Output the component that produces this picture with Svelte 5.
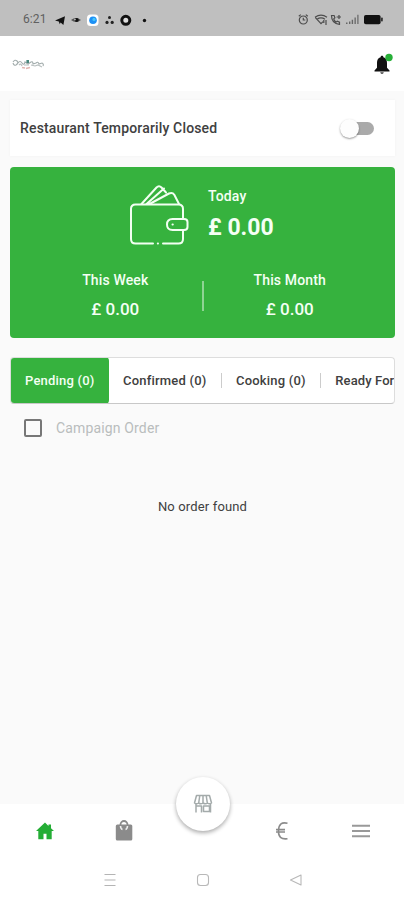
<script>
  const tabs = ['Pending (0)', 'Confirmed (0)', 'Cooking (0)', 'Ready For'];
  let active = $state(0);
  let closed = $state(false);
</script>

<div class="screen">
  <div class="status">
    <span class="time">6:21</span>
    <svg class="sys-left" width="98" height="16" viewBox="0 0 98 16">
      <path d="M1 8.6 11 4.2 9.4 13 6.6 10.4 5.8 12.2 4.8 9.4z" fill="#111" />
      <path d="M17 8q5-4 10 0q-5 4-10 0" fill="#555" />
      <circle cx="22.7" cy="8" r="2" fill="#111" />
      <circle cx="21" cy="7.6" r="0.8" fill="#ccc" />
      <rect x="33" y="2.5" width="11.5" height="11.5" rx="3.5" fill="#fff" />
      <circle cx="39" cy="8.2" r="3.8" fill="#1e90f5" />
      <circle cx="40" cy="7.4" r="1.6" fill="#45c6fa" />
      <circle cx="55.5" cy="5.6" r="1.5" fill="#222" />
      <circle cx="53" cy="10.4" r="1.6" fill="#222" />
      <circle cx="58.2" cy="10.4" r="1.6" fill="#222" />
      <circle cx="71.8" cy="8.3" r="4" fill="#ddd" stroke="#111" stroke-width="3" />
      <circle cx="90.5" cy="8.5" r="1.7" fill="#111" />
    </svg>
    <svg class="sys-right" width="86" height="16" viewBox="0 0 86 16">
      <g fill="none" stroke="#4c4c4c" stroke-width="1.2">
        <circle cx="5.3" cy="9" r="4" />
        <path d="M5.3 6.8V9h2M.8 5.2l2-1.600M9.800 5.200l-2-1.600" />
        <path d="M17 6.200q6-4 12 0M19 8.200q4-2.600 8 0M17.400 6.600 23 12.600l2-2M28 9v5M25.800 9v3" />
        <path d="M33.500 4.500q0 8 8 8.800v-2.200l-2.200-1-1.200 1q-2-1.200-2.400-3.200l1.200-1-.8-2.400zM38.600 6h4.400M41 4v4" />
      </g>
      <path d="M48 11.500h1.500V13H48zM51 10.500h1.400V13H51zM53.700 8.800h1.400V13h-1.400zM56.500 6.500h1.300V13h-1.300zM59.300 3.800h1.200V13h-1.200z" fill="#666" />
      <rect x="66" y="4" width="16.600" height="9.200" rx="1.800" fill="#111" />
      <rect x="83" y="6.500" width="1.800" height="4" rx=".7" fill="#333" />
    </svg>
  </div>

  <header>
    <svg width="32" height="14" viewBox="0 0 32 14" fill="none">
      <path d="M1 5q2-3 4-1t-1 4q-2 1-3-2M6 6q2-3 4 0t3-1l3 2 3-2q2-1 2 2l3-1q2-2 3 1l3-1q2 1 1 3" stroke="#a3adad" stroke-width="1.100" />
      <path d="M7 8q2-2 3 1M12 8h5M19 8l4 1 3-1 4 2" stroke="#b8bfbf" stroke-width="1.200" />
      <path d="M10 10.500l3 .5M14 11.500l4-1" stroke="#e2b5b1" stroke-width="1.500" />
      <path d="M14.400 3h2.600v3h-2.600z" fill="#4a877d" />
    </svg>
    <svg class="bell" width="22" height="24" viewBox="0 0 22 24">
      <path d="M10 3.800c-1 0-1.400.6-1.400 1.500C6 6.200 5 8 5 11v4.800L2.500 18.600v.8h15v-.8L15 15.800V11c0-3-1-4.800-3.600-5.700 0-.9-.4-1.500-1.400-1.500z" fill="#111" />
      <path d="M8.200 20.200h3.600q-.3 1.800-1.800 1.800t-1.800-1.800z" fill="#444" />
      <circle cx="17" cy="5.500" r="3.700" fill="#27b038" />
    </svg>
  </header>

  <main>
    <section class="closed">
      <span>Restaurant Temporarily Closed</span>
      <button class="switch" class:on={closed} aria-label="Restaurant temporarily closed" onclick={() => (closed = !closed)}><i></i></button>
    </section>

    <section class="earnings">
      <div class="today">
        <svg width="60" height="64" viewBox="0 0 60 64" fill="none" stroke="#f2fff2" stroke-width="2" stroke-linecap="round" stroke-linejoin="round">
          <path d="M34 60.500h15.500q4.500 0 4.500-4.500v-9M54 35v-9q0-4.500-4.500-4.500H6.500Q2 21.500 2 26v30q0 4.500 4.500 4.500H24M28.800 60.500h.2" />
          <path d="M12.500 21 27.500 4.500q2.500-2.500 5 0l4.500 5M20.500 21 40 10.500q3.500-1.500 5.300 1.300l4.700 9.200M17.500 21 35 5.500" />
          <path d="M43.500 36H55q3.500 0 3.500 3v5q0 3-3.500 3H43.500Q38 47 38 41.500T43.500 36zM43.500 41.500h.3" />
        </svg>
        <div>
          <p class="label">Today</p>
          <p class="big">£ 0.00</p>
        </div>
      </div>
      <div class="periods">
        <div><p class="label">This Week</p><p class="amount">£ 0.00</p></div>
        <i></i>
        <div><p class="label">This Month</p><p class="amount">£ 0.00</p></div>
      </div>
    </section>

    <div class="tabs">
      {#each tabs as tab, i}
        <button class:active={active === i} onclick={() => (active = i)}><span>{tab}</span></button>
      {/each}
    </div>

    <label class="campaign"><i></i><span>Campaign Order</span></label>
    <p class="empty">No order found</p>
  </main>

  <footer>
    <nav>
      <span><svg width="22" height="22" viewBox="0 0 22 22"><path d="M11 2.500 2 11h2.300v8.300h5.200v-5.500h3v5.500h5.200V11H20L17 8.200V4.500h-2.500V6z" fill="#24ad35" /></svg></span>
      <span><svg width="22" height="24" viewBox="0 0 22 24"><path d="M7.500 7V5.500a3.500 3.500 0 0 1 7 0V7" fill="none" stroke="#8b8b8b" stroke-width="1.800" /><rect x="2.800" y="5.500" width="16.500" height="16" rx="1.500" fill="#8b8b8b" /><path d="M7.500 7q.2 3 2 3.500M14.500 7q-.2 3-2 3.500" fill="none" stroke="#eee" stroke-width="1.600" /></svg></span>
      <span></span>
      <span><svg width="22" height="22" viewBox="0 0 22 22" fill="none" stroke="#8b8b8b" stroke-width="1.600"><path d="M16.500 3.300Q8 1 7.500 10.500T16.500 18.700M5 9.600h9M5 12h9" /></svg></span>
      <span><svg width="22" height="22" viewBox="0 0 22 22"><path d="M2 4.700h18v2H2zM2 10h18v2H2zM2 15.300h18v2H2z" fill="#999" /></svg></span>
    </nav>
    <div class="system">
      <svg width="14" height="14" viewBox="0 0 14 14"><path d="M1.500 1.500h11M1.500 7h11M1.500 12.500h11" stroke="#b4b4b4" stroke-width="1.100" /></svg>
      <svg width="14" height="14" viewBox="0 0 14 14"><rect x="1.500" y="1.500" width="11" height="11" rx="3" fill="none" stroke="#b8b8b8" stroke-width="1.100" /></svg>
      <svg width="14" height="14" viewBox="0 0 14 14"><path d="M1.500 7 12 2v10z" fill="none" stroke="#b8b8b8" stroke-width="1.100" stroke-linejoin="round" /></svg>
    </div>
    <button class="fab" aria-label="Restaurant">
      <svg width="20" height="20" viewBox="0 0 20 20" fill="none" stroke="#a4abab" stroke-width="1.500" stroke-linejoin="round">
        <path d="M3.500 1.500h13L18.500 9q-2 1.500-4 0-2 1.500-4.500 0-2 1.500-4.500 0-2 1.500-4 0zM6.800 1.500 5.700 9M13.200 1.500 14.300 9M10 1.500V9M3 9.500v9M3 12h5.500v6.500M10.500 12h6v5.500h-6zM17.500 9.500v9" />
      </svg>
    </button>
  </footer>
</div>

<style>
  :global(body) { background: #fafafa; }
  .screen { width: 404px; height: 900px; display: flex; flex-direction: column; background: #fafafa; font-family: Roboto, sans-serif; color: #404040; overflow: hidden; }
  p { margin: 0; }
  svg { display: block; flex: none; }
  button { font: inherit; border: 0; padding: 0; margin: 0; color: inherit; letter-spacing: inherit; }
  .status { height: 36px; background: #bfbfbf; display: flex; align-items: center; padding: 0 20px 0 23px; box-sizing: border-box; }
  .time { width: 31px; font-size: 12px; letter-spacing: .1px; color: #606060; white-space: nowrap; padding-top: 2px; }
  .sys-left { margin-top: 3px; }
  .sys-right { margin: 2px 0 0 auto; }
  header { height: 55px; background: #fff; display: flex; align-items: center; justify-content: space-between; padding: 0 10px 0 12px; box-sizing: border-box; }
  main { padding: 9px 9px 0 10px; flex: 1; }
  .closed { height: 56px; background: #fff; display: flex; align-items: center; justify-content: space-between; padding: 0 20px 0 10px; font-size: 14px; font-weight: 500; letter-spacing: .16px; box-shadow: 0 0 3px #0000000a; }
  .switch { width: 34px; height: 20px; display: flex; align-items: center; position: relative; background: none; margin-right: 1px; }
  .switch::before { content: ''; position: absolute; left: 3px; right: 0; top: 4px; height: 13px; border-radius: 7px; background: #aaa; }
  .switch i { position: relative; width: 19px; height: 19px; border-radius: 50%; background: #fdfdfd; box-shadow: 0 1px 2px #0006; }
  .switch.on i { margin-left: auto; }
  .earnings { height: 171px; margin-top: 11px; background: #36b23e; border-radius: 4px; color: #f4fff4; }
  .today { display: flex; padding: 16px 0 0 119px; gap: 19px; }
  .label { font-size: 14px; font-weight: 500; line-height: 20px; letter-spacing: .13px; }
  .today .label { padding-top: 3px; }
  .big { font-size: 23px; font-weight: 700; line-height: 32px; margin-top: 6px; }
  .periods { display: flex; align-items: center; padding: 23px 19px 0; }
  .periods div { flex: 1; text-align: center; }
  .periods i { width: 2px; height: 30px; background: #8fd494; }
  .amount { font-size: 17px; font-weight: 500; line-height: 24px; margin-top: 7px; }
  .tabs { height: 47px; margin-top: 19px; box-sizing: border-box; display: flex; background: #fff; border: 1px solid #ddd; border-bottom-color: #c8c8c8; border-radius: 4px; overflow: hidden; font-size: 13px; font-weight: 500; letter-spacing: .2px; }
  .tabs button { flex: none; background: none; display: flex; align-items: center; white-space: nowrap; }
  .tabs span { padding: 0 14px 0 14.500px; line-height: 15px; }
  .tabs button:nth-child(n + 2):not(:last-child) span { border-right: 1px solid #ccc; }
  .tabs button:last-child span { padding-right: 0; letter-spacing: .1px; }
  .tabs .active { background: #36b23e; color: #f4fff4; border-radius: 4px; margin: -1px 0 -1px -1px; }
  .tabs .active span { padding-left: 15px; }
  .campaign { display: flex; align-items: center; height: 47px; padding-left: 14px; gap: 14px; font-size: 14px; letter-spacing: .15px; color: #b9bdbd; }
  .campaign i { width: 18px; height: 18px; box-sizing: border-box; border: 2px solid #777; border-radius: 2px; }
  .empty { text-align: center; font-size: 13px; letter-spacing: .15px; line-height: 20px; margin-top: 46px; }
  footer { height: 96px; background: #fff; position: relative; }
  nav { display: flex; height: 54px; padding: 0 3px 0 5px; }
  nav span { flex: 1; display: flex; align-items: center; justify-content: center; }
  .system { display: flex; justify-content: center; gap: 79px; padding: 15px 0 0 1px; }
  .fab { position: absolute; left: 176px; top: -27px; width: 54px; height: 54px; border-radius: 50%; background: #fff; box-shadow: 0 2px 4px #0005; display: flex; align-items: center; justify-content: center; }
</style>
